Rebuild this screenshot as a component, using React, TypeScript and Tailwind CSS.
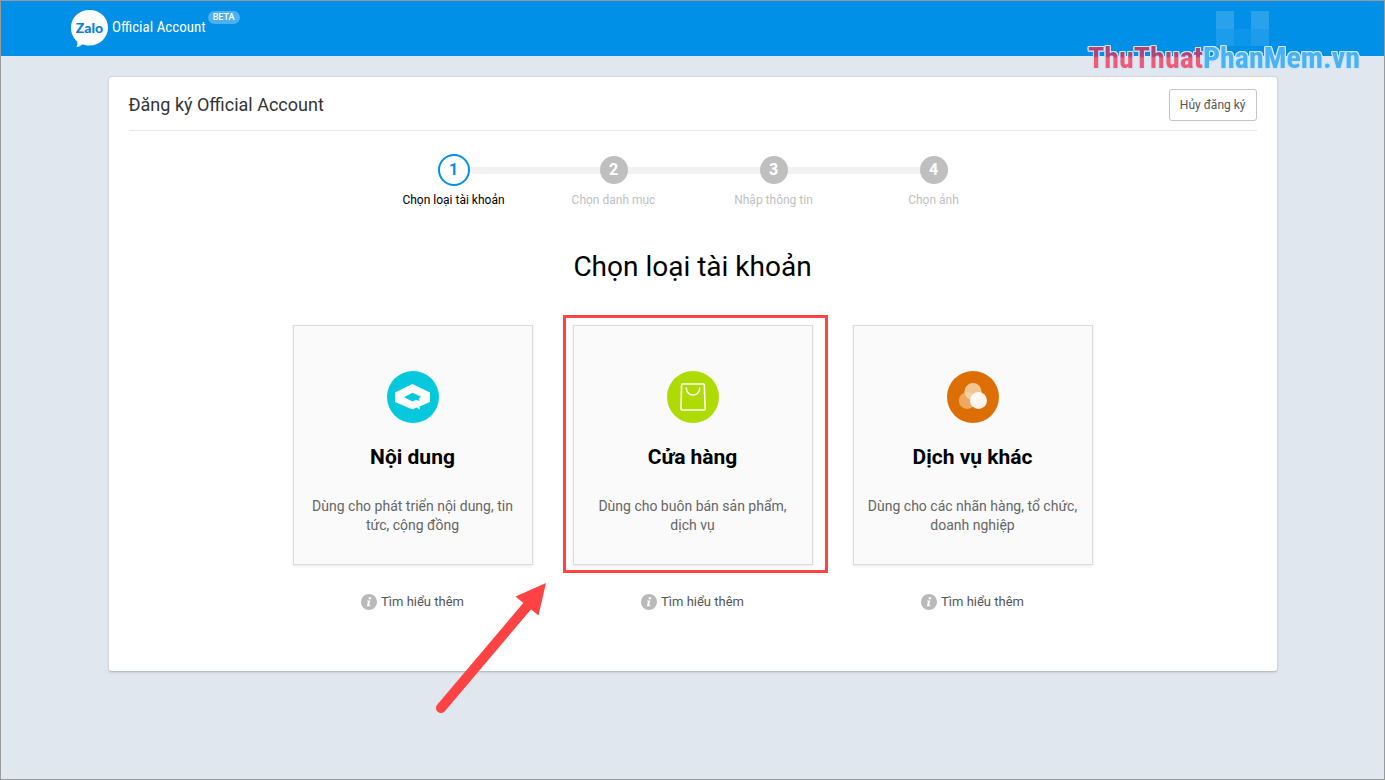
import type { ReactNode } from "react";

const steps = ["Chọn loại tài khoản", "Chọn danh mục", "Nhập thông tin", "Chọn ảnh"];

function ContentIcon() {
  return (
    <svg viewBox="0 0 52 52" className="size-[52px]" aria-hidden="true">
      <circle cx="26" cy="26" r="26" fill="#06c8dc" />
      <path d="M25.500 13 43 21.500V31l-10.500 4.500.5 3-3.500-2-4 2L8 31V21.500Z" fill="#fff" />
      <path d="M17 26.200 25.500 21.800 34 25.800 32 27.500 32.500 30 29 28.800 25.500 30.500Z" fill="#06c8dc" />
    </svg>
  );
}

function ShopIcon() {
  return (
    <svg viewBox="0 0 52 52" className="size-[52px]" aria-hidden="true">
      <circle cx="26" cy="26" r="26" fill="#aedb02" />
      <g fill="none" stroke="#fff" strokeWidth="1.600" strokeLinecap="round" strokeLinejoin="round">
        <path d="M15.500 13h20.800q1 0 1 1l.9 24q0 1-1 1H15q-1 0-1-1l.6-24q0-1 .9-1Z" />
        <path d="M19.300 17c0 9.300 13.400 9.300 13.400 0" />
      </g>
    </svg>
  );
}

function ServiceIcon() {
  return (
    <svg viewBox="0 0 52 52" className="size-[52px]" aria-hidden="true">
      <circle cx="26" cy="26" r="26" fill="#dc6e04" />
      <circle cx="20.300" cy="29.500" r="8.500" fill="#f5c08c" fillOpacity=".7" />
      <circle cx="26" cy="20.500" r="8.500" fill="#fbd9b5" fillOpacity=".8" />
      <circle cx="31.500" cy="29.500" r="8.500" fill="#fff" fillOpacity=".92" />
    </svg>
  );
}

type Option = { title: string; text: string; icon: ReactNode; marked?: boolean };

const options: Option[] = [
  { title: "Nội dung", text: "Dùng cho phát triển nội dung, tin tức, cộng đồng", icon: <ContentIcon /> },
  { title: "Cửa hàng", text: "Dùng cho buôn bán sản phẩm, dịch vụ", icon: <ShopIcon />, marked: true },
  { title: "Dịch vụ khác", text: "Dùng cho các nhãn hàng, tổ chức, doanh nghiệp", icon: <ServiceIcon /> },
];

function Marker() {
  return (
    <>
      <div className="pointer-events-none absolute -top-[10px] -right-[15px] -bottom-2 -left-[10px] border-3 border-[#ff4344]" />
      <svg
        viewBox="0 0 112 132"
        className="pointer-events-none absolute top-[257px] -left-[138px] h-[132px] w-[112px]"
        aria-hidden="true"
      >
        <path d="M6 126 94 22" stroke="#ff4344" strokeWidth="10" strokeLinecap="round" />
        <path d="M111 1 80.500 14.500 103.500 33.500Z" fill="#ff4344" />
      </svg>
    </>
  );
}

function OptionCard({ title, text, icon, marked }: Option) {
  return (
    <li className="flex w-60 flex-col items-center">
      <div className="relative w-full">
        <button
          type="button"
          className="flex h-60 w-full cursor-pointer flex-col items-center border border-[#dcdcdc] bg-[#fafafa] px-3 pt-[45px] shadow-[0_1px_3px_rgba(0,0,0,0.1)]"
        >
          {icon}
          <span className="mt-5 text-[21px] leading-7 font-bold text-black">{title}</span>
          <span className="mt-[26px] text-[14px] leading-[19px] text-[#666]">{text}</span>
        </button>
        {marked && <Marker />}
      </div>
      <a href="#more" className="mt-[27px] flex items-center gap-1 text-[13px] leading-5 text-[#555]">
        <svg viewBox="0 0 16 16" className="size-4" aria-hidden="true">
          <circle cx="8" cy="8" r="8" fill="#b9b9b9" />
          <circle cx="8.900" cy="4.300" r="1.200" fill="#fff" />
          <path d="M6.300 6.500h3L8.200 11.300h1.300l-.3 1H5.900L7 7.500H6Z" fill="#fff" />
        </svg>
        Tìm hiểu thêm
      </a>
    </li>
  );
}

function Logo() {
  return (
    <a href="#home" className="flex items-start text-white">
      <span className="relative mt-[9px] flex h-[38px] w-[37px] justify-center">
        <svg viewBox="0 0 37 38" className="absolute inset-0 size-full" aria-hidden="true">
          <path
            d="M18.500 0C29 0 37 7.500 37 17.500S29 35.500 18.500 35.500c-2.700 0-5-.4-7-1.200-1.500 1.300-3.500 2.500-6 2.700.8-1.700 1-3.700.8-5.500C2.300 28.300 0 23.500 0 17.500 0 7.500 8 0 18.500 0Z"
            fill="#fff"
          />
        </svg>
        <span className="relative pt-2 font-['Lato',sans-serif] text-[14px] leading-5 font-black text-[#0a7fd9]">
          Zalo
        </span>
      </span>
      <span className="mt-[15px] ml-1 font-['Roboto_Condensed','Roboto',sans-serif] text-[15px] leading-[22px]">
        Official Account
      </span>
      <span className="mt-[10px] ml-0.5 rounded-full bg-[#4db1ee] px-[5px] text-[9px] leading-[13px] font-medium">BETA</span>
    </a>
  );
}

function Watermark() {
  return (
    <div className="pointer-events-none absolute top-[10px] right-6 flex flex-col items-end">
      <svg viewBox="0 0 53 35" className="mr-[91px] h-[35px] w-[53px]" aria-hidden="true">
        <path d="M0 0h18v18H0ZM35 0h18v18H35Z" fill="#fff" fillOpacity=".16" />
        <path d="M0 18h18v17H0ZM35 18h18v17H35Z" fill="#fff" fillOpacity=".11" />
        <path d="M18 18h17v17H18Z" fill="#fff" fillOpacity=".05" />
      </svg>
      <div className="-mt-1.5 flex font-['Liberation_Sans_Narrow','Roboto_Condensed','Roboto',sans-serif] text-[30px] leading-9 font-bold whitespace-nowrap [filter:drop-shadow(1px_0_#cfe5f5)_drop-shadow(-1px_0_#cfe5f5)_drop-shadow(0_1px_#cfe5f5)_drop-shadow(0_-1px_#cfe5f5)]">
        <span className="bg-linear-to-b from-[#b04478] from-45% to-[#f05a76] to-50% bg-clip-text text-transparent">
          ThuThuat
        </span>
        <span className="text-[#48b2f5]">PhanMem.vn</span>
      </div>
    </div>
  );
}

export default function App() {
  return (
    <div className="relative min-h-screen border border-[#999] bg-[#e0e7ef] font-['Roboto','Noto_Sans',sans-serif]">
      <header className="h-[55px] bg-[#0190e8] pl-[70px]">
        <Logo />
      </header>

      <main className="mx-auto mt-5 w-full max-w-[1170px] rounded border border-[#d2d8de] border-b-[#b4bfca] bg-white px-5 pb-[59px] shadow-[0_1px_2px_rgba(0,0,0,0.1)]">
        <div className="flex h-[54px] items-center justify-between border-b border-[#e2e8ed] pt-0.5">
          <h1 className="text-[18px] leading-6 text-[#333]">Đăng ký Official Account</h1>
          <button
            type="button"
            className="h-8 cursor-pointer rounded-[3px] border border-[#c4c4c4] bg-white px-[10px] text-[12px] leading-4 text-[#555]"
          >
            Hủy đăng ký
          </button>
        </div>

        <ol className="mt-[23px] flex justify-center pl-0.5">
          {steps.map((label, i) => (
            <li key={label} className="flex w-40 flex-col items-center">
              <div className="flex h-8 w-full items-center">
                <span className={i === 0 ? "h-[7px] flex-1" : "h-[7px] flex-1 bg-[#f2f2f2]"} />
                <span
                  className={
                    i === 0
                      ? "flex size-8 items-center justify-center rounded-full border-2 border-[#0190e8] text-[16px] font-bold text-[#0190e8]"
                      : "flex size-7 items-center justify-center rounded-full bg-[#bfbfbf] text-[16px] font-bold text-white"
                  }
                >
                  {i + 1}
                </span>
                <span className={i === steps.length - 1 ? "h-[7px] flex-1" : "h-[7px] flex-1 bg-[#f2f2f2]"} />
              </div>
              <span
                className={
                  i === 0
                    ? "mt-[5px] text-[12px] leading-[18px] text-black"
                    : "mt-[5px] text-[12px] leading-[18px] text-[#bfbfbf]"
                }
              >
                {label}
              </span>
            </li>
          ))}
        </ol>

        <h2 className="mt-10 text-center text-[28px] leading-9 text-black">Chọn loại tài khoản</h2>

        <ul className="mt-10 flex flex-wrap justify-center gap-10">
          {options.map((o) => (
            <OptionCard key={o.title} {...o} />
          ))}
        </ul>
      </main>

      <Watermark />
    </div>
  );
}
